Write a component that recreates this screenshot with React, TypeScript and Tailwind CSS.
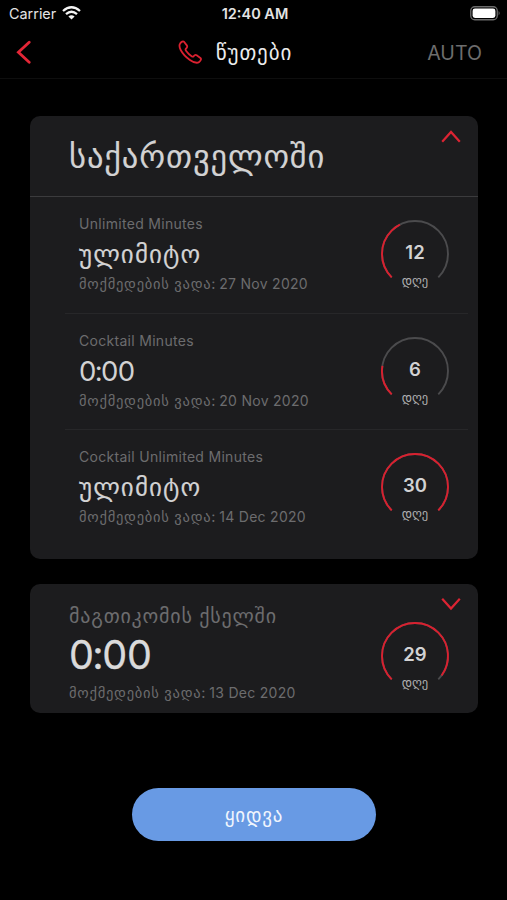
import React from "react";

interface Pack {
  id: number;
  title: string;
  amount: string;
  date: string;
  days: number;
}

const packs: Pack[] = [
  { id: 1, title: "Unlimited Minutes", amount: "ულიმიტო", date: "27 Nov 2020", days: 12 },
  { id: 2, title: "Cocktail Minutes", amount: "0:00", date: "20 Nov 2020", days: 6 },
  { id: 3, title: "Cocktail Unlimited Minutes", amount: "ულიმიტო", date: "14 Dec 2020", days: 30 },
];

// 270 degree gauge, open at the bottom
const DaysRing: React.FC<{ days: number }> = ({ days }) => {
  const arc = "M11.7 58.3 A33 33 0 1 1 58.3 58.3";
  return (
    <div className="relative h-[70px] w-[70px] shrink-0">
      <svg viewBox="0 0 70 70" className="h-full w-full" fill="none" strokeWidth="1.9">
        <path d={arc} stroke="#4b4b4d" />
        <path d={arc} stroke="#d9202f" pathLength={30} strokeDasharray={`${days} 60`} />
      </svg>
      <div className="absolute inset-x-0 top-[21px] text-center text-[18.5px] leading-6 font-semibold text-[#d2d2d3]">
        {days}
      </div>
      <div className="absolute inset-x-0 top-[54px] text-center text-[12.5px] leading-4 text-[#b0b0b1]">დღე</div>
    </div>
  );
};

// minutes and seconds, with the colon set tight between the digits
const Time: React.FC<{ value: string }> = ({ value }) => {
  const [min, sec] = value.split(":");
  return (
    <>
      {min}
      <span className="-mx-[0.04em]">:</span>
      {sec}
    </>
  );
};

const Expiry: React.FC<{ date: string }> = ({ date }) => (
  <p className="flex gap-[3px] text-[14px] leading-5 whitespace-nowrap text-[#6c6c6e]">
    <span className="text-[14.5px] tracking-[0.74px]">მოქმედების ვადა:</span>
    <span className="tracking-[0.28px]">{date}</span>
  </p>
);

const StatusBar = () => (
  <div className="flex h-[27px] items-center pr-[6px] pl-[9px] text-[14.4px] text-[#e4e4e4]">
    <div className="flex flex-1 items-center gap-1.5">
      <span>Carrier</span>
      <svg width="19" height="14" viewBox="0 0 19 14" fill="none" stroke="#f4f4f4" strokeWidth="2.3">
        <path d="M1 5 Q9.5 -2.5 18 5" />
        <path d="M4 8.2 Q9.5 3.2 15 8.2" />
        <path d="M9.5 13.6 L6.4 10.6 Q9.5 8 12.6 10.6 Z" fill="#f4f4f4" stroke="none" />
      </svg>
    </div>
    <span className="text-[14.5px] font-semibold">12:40 AM</span>
    <div className="flex flex-1 justify-end">
      <svg width="31" height="15" viewBox="0 0 31 15">
        <rect x="0.75" y="0.75" width="26.5" height="13" rx="4" fill="none" stroke="#6b6b6b" strokeWidth="1.3" />
        <rect x="2.6" y="2.6" width="22.8" height="9.3" rx="2.4" fill="#fff" />
        <path d="M28.6 5 Q30.6 7.2 28.6 9.5 Z" fill="#6b6b6b" />
      </svg>
    </div>
  </div>
);

const NavBar = () => (
  <div className="grid h-[52px] grid-cols-[1fr_auto_1fr] items-center border-b border-[#0e0e0e] pr-[25px] pl-4">
    <svg className="-mt-px" width="16" height="24" viewBox="0 0 16 24" fill="none" stroke="#e32636" strokeWidth="2.8" strokeLinecap="round">
      <path d="M13.2 2.2 L2.4 12.2 L13.2 22.2" />
    </svg>
    <div className="mr-7 flex items-center gap-[14px]">
      <svg className="-mt-0.5" width="24" height="24" viewBox="0 0 24 24" fill="none" stroke="#dc2130" strokeWidth="1.8" strokeLinejoin="round">
        <path d="M2.2 3.4 C3.4 1.8 5 0.9 6 1.7 L9 5.6 C9.7 6.8 9 7.8 7.7 9 C7.3 9.6 7.6 10.2 8.2 11 C9.8 13.2 11.4 14.9 13.6 16.2 C14.5 16.8 15.1 16.9 15.6 16.3 C16.6 15 17.7 14.6 18.7 15.3 L22.4 17.9 C23.6 18.9 22.9 20.4 21.1 22 C19.2 23.4 15.8 22.6 11.9 19.9 C8.5 17.6 4.5 13.4 2.7 10 C1.2 7.1 1.2 4.8 2.2 3.4 Z" />
      </svg>
      <h1 className="text-[21px] leading-6 tracking-[0.9px] text-[#ececec]">წუთები</h1>
    </div>
    <span className="justify-self-end pt-0.5 text-[19.6px] text-[#6d6d6d]">AUTO</span>
  </div>
);

export default function App() {
  return (
    <div className="flex h-[900px] w-full flex-col bg-black font-['Inter','DejaVu_Sans',sans-serif]">
      <StatusBar />
      <NavBar />

      <main className="flex flex-col px-[30px] pt-[37px]">
        <section className="h-[443px] w-[448px] rounded-[10px] bg-[#1c1c1e]">
          <div className="flex h-[81px] justify-between border-b border-[#3b3b3d] pr-[17px] pl-[39px]">
            <h2 className="pt-[21px] text-[32.5px] leading-10 tracking-[0.9px] text-[#d2d2d3] [-webkit-text-stroke:0.15px]">
              საქართველოში
            </h2>
            <svg className="mt-[14px]" width="20" height="14" viewBox="0 0 20 14" fill="none" stroke="#dc2433" strokeWidth="2.2">
              <path d="M1.2 11.8 L10 2 L18.8 11.8" />
            </svg>
          </div>

          {packs.map((pack, i) => (
            <div
              key={pack.id}
              className={`mr-2.5 ml-[35px] flex h-[116.5px] justify-between pr-[18px] pl-[14px] ${
                i < packs.length - 1 ? "border-b border-[#272729]" : ""
              }`}
            >
              <div className="pt-[17px]">
                <p className="text-[14px] leading-5 tracking-[0.3px] text-[#6c6c6e]">{pack.title}</p>
                <p className="h-10 leading-10 text-[#d2d2d3]">
                  {pack.amount.includes(":") ? (
                    <span className="text-[27.5px] tracking-[-0.02em]">
                      <Time value={pack.amount} />
                    </span>
                  ) : (
                    <span className="text-[25px] tracking-[1.1px] [-webkit-text-stroke:0.15px]">{pack.amount}</span>
                  )}
                </p>
                <Expiry date={pack.date} />
              </div>
              <div className="pt-[22px]">
                <DaysRing days={pack.days} />
              </div>
            </div>
          ))}
        </section>

        <section className="mt-[25px] flex h-[129px] w-[448px] justify-between rounded-[10px] bg-[#1c1c1e] pr-[17px] pl-[39px]">
          <div className="pt-[20px]">
            <h2 className="text-[20px] leading-6 tracking-[0.8px] text-[#6c6c6e]">მაგთიკომის ქსელში</h2>
            <p className="text-[39.5px] leading-[55px] text-[#dadadb] [-webkit-text-stroke:0.3px]">
              <Time value="0:00" />
            </p>
            <Expiry date="13 Dec 2020" />
          </div>
          <div className="flex flex-col items-end pt-[13px]">
            <svg width="20" height="14" viewBox="0 0 20 14" fill="none" stroke="#dc2433" strokeWidth="2.2">
              <path d="M1.2 1.8 L10 11.6 L18.8 1.8" />
            </svg>
            <div className="mt-[10px] mr-[11px]">
              <DaysRing days={29} />
            </div>
          </div>
        </section>

        <button className="mt-[75px] ml-[102px] h-[53px] w-[244px] rounded-full bg-[#689ae4] pt-[3px] text-[19px] tracking-[0.8px] text-[#f0f5fd]">
          ყიდვა
        </button>
      </main>
    </div>
  );
}
